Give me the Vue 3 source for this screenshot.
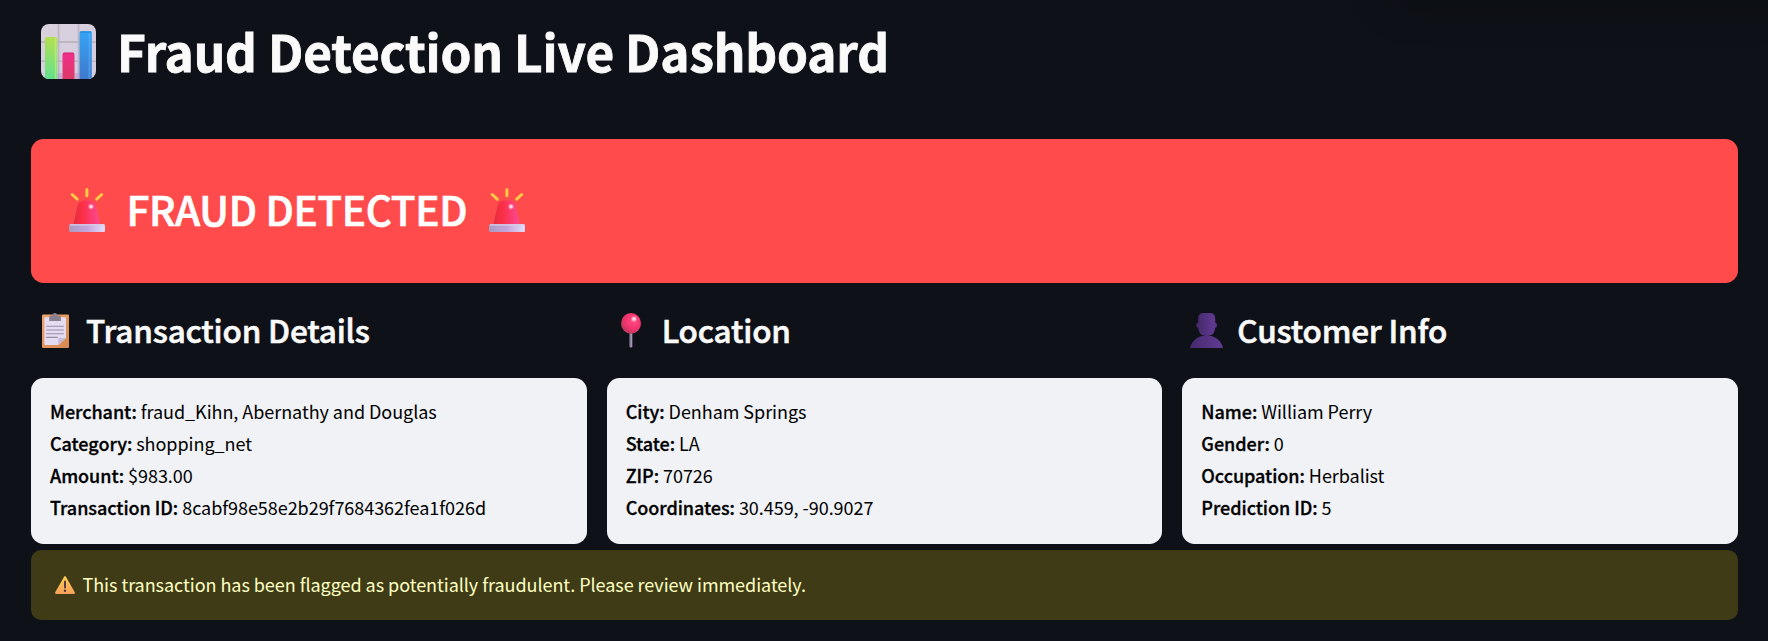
<script setup>
const sections = [
  {
    icon: 'clipboard',
    title: 'Transaction Details',
    rows: [
      ['Merchant:', 'fraud_Kihn, Abernathy and Douglas'],
      ['Category:', 'shopping_net'],
      ['Amount:', '$983.00'],
      ['Transaction ID:', '8cabf98e58e2b29f7684362fea1f026d'],
    ],
  },
  {
    icon: 'pin',
    title: 'Location',
    rows: [
      ['City:', 'Denham Springs'],
      ['State:', 'LA'],
      ['ZIP:', '70726'],
      ['Coordinates:', '30.459, -90.9027'],
    ],
  },
  {
    icon: 'person',
    title: 'Customer Info',
    rows: [
      ['Name:', 'William Perry'],
      ['Gender:', '0'],
      ['Occupation:', 'Herbalist'],
      ['Prediction ID:', '5'],
    ],
  },
]
</script>

<template>
  <main class="page">
    <div class="glow"></div>
    <svg class="defs" width="0" height="0" aria-hidden="true">
      <defs>
        <linearGradient id="gTile" x1="0" y1="0" x2="1" y2="1"><stop offset="0" stop-color="#d9d2dc" /><stop offset="1" stop-color="#d3cbe0" /></linearGradient>
        <linearGradient id="gGreen" x1="0" y1="0" x2="0" y2="1"><stop offset="0" stop-color="#b3e04f" /><stop offset="1" stop-color="#62e08f" /></linearGradient>
        <linearGradient id="gRed" x1="0" y1="0" x2="0" y2="1"><stop offset="0" stop-color="#f0308a" /><stop offset="1" stop-color="#dd3a68" /></linearGradient>
        <linearGradient id="gBlue" x1="0" y1="0" x2="0" y2="1"><stop offset="0" stop-color="#35a4f5" /><stop offset="1" stop-color="#4079cd" /></linearGradient>
        <linearGradient id="gDome" x1="0" y1="0" x2="1" y2="0"><stop offset="0" stop-color="#dc2f45" /><stop offset=".3" stop-color="#fb2d40" /><stop offset="1" stop-color="#fb4a97" /></linearGradient>
        <linearGradient id="gBase" x1="0" y1="0" x2="1" y2="0"><stop offset="0" stop-color="#a99ac0" /><stop offset=".5" stop-color="#c3a6dc" /><stop offset="1" stop-color="#e6dcf8" /></linearGradient>
        <linearGradient id="gBoard" x1="0" y1="0" x2="1" y2="1"><stop offset="0" stop-color="#eba66c" /><stop offset="1" stop-color="#d9884f" /></linearGradient>
        <radialGradient id="gBall" cx=".62" cy=".38" r=".65"><stop offset="0" stop-color="#ff4d86" /><stop offset=".6" stop-color="#f4336f" /><stop offset="1" stop-color="#b93a5c" /></radialGradient>
        <radialGradient id="gShine"><stop offset="0" stop-color="#ffe9f0" /><stop offset=".4" stop-color="#ffc4d4" /><stop offset="1" stop-color="#ff7d9d" stop-opacity="0" /></radialGradient>
        <linearGradient id="gHead" x1="0" y1="0" x2="1" y2="0"><stop offset="0" stop-color="#472a6c" /><stop offset="1" stop-color="#613a94" /></linearGradient>
        <linearGradient id="gWarn" x1="0" y1="0" x2="0" y2="1"><stop offset="0" stop-color="#ffd04a" /><stop offset="1" stop-color="#f9a05c" /></linearGradient>
        <clipPath id="tileClip"><rect width="55" height="55" rx="8" /></clipPath>
      </defs>
    </svg>

    <h1 class="title">
      <svg class="chart" viewBox="0 0 55 55">
        <g clip-path="url(#tileClip)">
          <rect width="55" height="55" fill="url(#gTile)" />
          <path d="M17.6 0V55M37.6 0V55M0 18H55M0 37.2H55" stroke="#bdb6c2" stroke-width="1.8" />
          <path d="M16.3 49H21.5V55H16.3ZM33.5 49H38.5V55H33.5Z" fill="#b99ad0" opacity=".6" />
          <path d="M4 55V15Q4 13 6 13H14.2Q16.2 13 16.2 15V55Z" fill="url(#gGreen)" />
          <path d="M14.6 14V55" stroke="#c6f46a" stroke-width="1.6" opacity=".6" />
          <path d="M21.5 55V30.4Q21.5 28.4 23.5 28.4H31.5Q33.5 28.4 33.5 30.4V55Z" fill="url(#gRed)" />
          <path d="M22 29.5H33" stroke="#d02e70" stroke-width="1.5" opacity=".7" />
          <path d="M38.5 55V9Q38.5 7 40.5 7H48.8Q50.8 7 50.8 9V55Z" fill="url(#gBlue)" />
          <path d="M39 8.2H50.3" stroke="#2885d4" stroke-width="1.5" opacity=".6" />
          <path d="M48.4 9V55" stroke="#57bbff" stroke-width="1.6" opacity=".5" />
        </g>
      </svg>
      <span class="title-text">Fraud Detection Live Dashboard</span>
    </h1>

    <section class="banner">
      <template v-for="n in 2" :key="n">
        <svg class="siren" viewBox="0 0 36 44">
          <path d="M17.9 1.5V7.8M3.2 6.5L8.2 11.2M32.7 6.5L27.7 11.2" stroke="#f8ca45" stroke-width="3" stroke-linecap="round" />
          <path d="M4.2 37L8.6 18Q10 12.8 16 12.6H19.6Q25.4 12.8 26.8 18L30.8 37Z" fill="url(#gDome)" />
          <circle cx="22" cy="18.6" r="3.4" fill="url(#gShine)" />
          <rect y="36" width="36" height="8" rx="1.5" fill="url(#gBase)" />
          <path d="M1 36.8H35" stroke="#d8cbe8" stroke-width="1.2" />
        </svg>
        <span v-if="n === 1" class="banner-text">FRAUD DETECTED</span>
      </template>
    </section>

    <div class="columns">
      <section v-for="s in sections" :key="s.title" class="column">
        <h3 class="heading" :class="s.icon">
          <svg v-if="s.icon === 'clipboard'" class="icon" viewBox="0 0 27 35">
            <rect y="1.5" width="27" height="33.5" rx="1" fill="url(#gBoard)" />
            <path d="M3.3 4.3H23.2Q24 4.3 24 5.1V25L16.5 32H3.3Q2.4 32 2.4 31V5.1Q2.4 4.3 3.3 4.3Z" fill="#e4dcf0" />
            <path d="M16.3 32V26.2Q16.3 25 17.6 25H24Z" fill="#c9bad8" />
            <path d="M4.6 13.3H21.4M4.6 17H21.4M4.6 20.7H21.4M4.6 24.4H15.4" stroke="#9b8da8" stroke-width="1.1" stroke-linecap="round" />
            <path d="M7.2 8V4.4Q7.2 2.6 9.2 2.6H10.4Q10.5 0 12.9 0T15.3 2.6H16.8Q18.9 2.6 18.9 4.4V8Z" fill="#88808f" />
            <circle cx="12.9" cy="2" r=".8" fill="#b98a68" />
          </svg>
          <svg v-else-if="s.icon === 'pin'" class="icon" viewBox="0 0 20 35">
            <path d="M8.4 17H11.4V33.6Q9.9 36 8.4 33.6Z" fill="#877d98" />
            <path d="M10.4 20V34" stroke="#a99fba" stroke-width="1" />
            <ellipse cx="10" cy="10.4" rx="10" ry="10.4" fill="url(#gBall)" />
            <circle cx="13" cy="6" r="3.6" fill="url(#gShine)" />
          </svg>
          <svg v-else class="icon" viewBox="0 0 33 35">
            <ellipse cx="8" cy="12.3" rx="1.7" ry="2.5" fill="#472a6c" />
            <ellipse cx="25.4" cy="12.3" rx="1.7" ry="2.5" fill="#523180" />
            <path d="M0 35Q1.5 28.5 7 25Q11 22.6 16.5 22.6T26 25Q31.5 28.5 33 35Z" fill="url(#gHead)" />
            <path d="M8.2 5.5Q8.2 0 13.4 0H20Q25.2 0 25.2 5.5V14Q25 19.4 21.8 21.8Q20 22.9 16.7 22.9T11.6 21.8Q8.4 19.4 8.2 14Z" fill="url(#gHead)" />
          </svg>
          <span class="heading-text">{{ s.title }}</span>
        </h3>
        <div class="card">
          <div v-for="r in s.rows" :key="r[0]" class="row"><b>{{ r[0] }}</b> {{ r[1] }}</div>
        </div>
      </section>
    </div>

    <section class="alert">
      <svg class="warn" viewBox="0 0 20 18">
        <path d="M9.1 .7Q10 -.5 10.9 .7L19.8 16.3Q20.2 17.8 18.8 18H1.2Q-.2 17.8 .2 16.3Z" fill="url(#gWarn)" />
        <path d="M10 5.6V11.6" stroke="#533b50" stroke-width="2" stroke-linecap="round" />
        <circle cx="10" cy="14.7" r="1.2" fill="#533b50" />
      </svg>
      <span class="alert-text">This transaction has been flagged as potentially fraudulent. Please review immediately.</span>
    </section>
  </main>
</template>

<style>
body {
  background: #0e1117;
}
</style>

<style scoped>
.page {
  position: relative;
  box-sizing: border-box;
  width: 100%;
  height: 641px;
  padding: 0 30px 0 31px;
  overflow: hidden;
  background: #0e1117;
  color: #fafafa;
  font-family: "Noto Sans CJK SC", "Noto Sans", sans-serif;
  white-space: nowrap;
}
.defs {
  position: absolute;
}
.glow {
  position: absolute;
  top: -60px;
  right: -40px;
  width: 420px;
  height: 60px;
  border-radius: 12px;
  box-shadow: 0 2px 44px rgba(0, 0, 0, 0.22);
}
svg {
  flex: none;
  display: block;
}
.title {
  display: flex;
  align-items: flex-start;
  box-sizing: border-box;
  height: 139px;
  margin: 0;
  padding: 24px 0 0 10px;
  font-size: 49.5px;
  font-weight: 700;
  line-height: 55px;
  letter-spacing: -0.14px;
}
.chart {
  width: 55px;
  height: 55px;
  margin-right: 21px;
}
.title-text {
  margin-top: -1.5px;
  -webkit-text-stroke: 0.8px #fafafa;
}
.banner {
  display: flex;
  box-sizing: border-box;
  height: 144px;
  padding: 49px 38px 0;
  border-radius: 12.5px;
  background: #ff4b4b;
  color: #fff;
  font-size: 40.5px;
  font-weight: 500;
  line-height: 44px;
  letter-spacing: -0.33px;
  -webkit-text-stroke: 0.7px #fff;
}
.siren {
  width: 36px;
  height: 44px;
}
.banner-text {
  width: 384px;
  box-sizing: border-box;
  padding-left: 21.5px;
  margin-top: -1px;
}
.columns {
  display: grid;
  grid-template-columns: repeat(3, 1fr);
  gap: 20px;
}
.heading {
  display: flex;
  box-sizing: border-box;
  height: 95px;
  margin: 0;
  padding: 30px 0 0 11px;
  font-size: 31.5px;
  font-weight: 500;
  line-height: 35px;
  letter-spacing: -0.18px;
  -webkit-text-stroke: 0.6px #fafafa;
}
.icon {
  height: 35px;
}
.clipboard .icon {
  width: 27px;
  margin-right: 17px;
}
.pin {
  padding-left: 14px;
}
.pin .icon {
  width: 20px;
  margin-right: 21px;
}
.person {
  padding-left: 8px;
}
.person .icon {
  width: 33px;
  margin-right: 14px;
}
.heading-text {
  margin-top: -1px;
}
.card {
  box-sizing: border-box;
  height: 166px;
  padding: 17px 19px 0;
  border-radius: 12.5px;
  background: #f0f2f6;
  color: #000;
  font-size: 18px;
  line-height: 32px;
  letter-spacing: -0.045px;
}
.row b {
  font-weight: 500;
  letter-spacing: -0.04px;
  -webkit-text-stroke: 0.3px #000;
}
.alert {
  display: flex;
  align-items: center;
  box-sizing: border-box;
  height: 70px;
  margin-top: 6px;
  padding: 0 24px;
  border-radius: 10px;
  background: #3e3b16;
  color: #ffffc2;
  font-size: 18px;
  line-height: 32px;
  letter-spacing: -0.045px;
}
.alert-text {
  margin-top: -3px;
}
.warn {
  width: 20px;
  height: 18px;
  margin-right: 7.5px;
}
</style>
